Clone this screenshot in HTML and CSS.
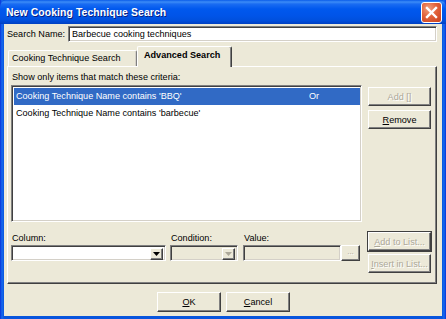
FILE: index.html
```html
<!DOCTYPE html>
<html>
<head>
<meta charset="utf-8">
<link rel="stylesheet" href="styles.css">
</head>
<body>
<div class="window">
  <div class="titlebar">
    <span class="title">New Cooking Technique Search</span>
    <span class="close">
      <svg width="21" height="21" viewBox="0 0 21 21">
        <path d="M6 6 L15 15 M15 6 L6 15" stroke="#fff" stroke-width="2.4" stroke-linecap="square"/>
      </svg>
    </span>
  </div>
  <div class="client">
    <div class="search-row">
      <label class="search-label">Search Name:</label>
      <div class="field search-field">Barbecue cooking techniques</div>
    </div>
    <div class="tabs">
      <div class="tab">Cooking Technique Search</div>
      <div class="tab active">Advanced Search</div>
    </div>
    <div class="panel">
      <div class="criteria-label">Show only items that match these criteria:</div>
      <div class="top-row">
        <div class="list">
          <div class="item selected"><span class="item-text">Cooking Technique Name contains 'BBQ'</span><span class="item-op">Or</span></div>
          <div class="item"><span class="item-text">Cooking Technique Name contains 'barbecue'</span></div>
        </div>
        <div class="btn-col">
          <div class="btn disabled">Add []</div>
          <div class="btn"><u>R</u>emove</div>
        </div>
      </div>
      <div class="bottom-row">
        <div class="fields">
          <div class="fgroup g-col">
            <div class="flabel">Column:</div>
            <div class="combo">
              <div class="combo-text"></div>
              <div class="arrow"><svg width="7" height="4" viewBox="0 0 7 4"><path d="M0 0H7L3.5 4Z" fill="#000"/></svg></div>
            </div>
          </div>
          <div class="fgroup g-cond">
            <div class="flabel">Condition:</div>
            <div class="combo dis">
              <div class="combo-text"></div>
              <div class="arrow"><svg width="7" height="4" viewBox="0 0 7 4"><path d="M0 0H7L3.5 4Z" fill="#aca899"/></svg></div>
            </div>
          </div>
          <div class="fgroup g-val">
            <div class="flabel">Value:</div>
            <div class="val-row">
              <div class="field val-field dis"></div>
              <div class="btn dots disabled">...</div>
            </div>
          </div>
        </div>
        <div class="btn-col btn-col2">
          <div class="btn disabled focus"><u>A</u>dd to List...</div>
          <div class="btn disabled"><u>I</u>nsert in List...</div>
        </div>
      </div>
    </div>
    <div class="footer">
      <div class="btn big"><u>O</u>K</div>
      <div class="btn big"><u>C</u>ancel</div>
    </div>
  </div>
</div>
</body>
</html>
```

FILE: styles.css
```css
* { box-sizing: border-box; }
html, body { margin: 0; padding: 0; }
body {
  width: 446px;
  height: 319px;
  overflow: hidden;
  font-family: "Liberation Sans", Arial, sans-serif;
  font-size: 9.1px;
  color: #000;
  white-space: nowrap;
}
.window {
  width: 446px;
  height: 319px;
  background: linear-gradient(to right, #0831d9 0, #166aee 2px, #0855dd 4px, #0855dd 442px, #166aee 444px, #0831d9 446px);
  display: flex;
  flex-direction: column;
  padding: 0 4px 3px 4px;
}
.titlebar {
  height: 24px;
  margin: 0 -4px;
  padding: 0 4px 0 6px;
  display: flex;
  align-items: center;
  justify-content: space-between;
  background: linear-gradient(to bottom, #0a5ce9 0, #3c8cf7 2px, #1a6cf2 4px, #0058ee 9px, #0054e8 16px, #0050de 20px, #0048d2 22px, #0040c0 24px);
  border-radius: 7px 7px 0 0;
}
.title {
  color: #fff;
  font-weight: bold;
  font-size: 10.4px;
  text-shadow: 1px 1px #0a1e80;
  letter-spacing: 0.1px;
  padding-top: 1px;
}
.close {
  width: 21px;
  height: 21px;
  margin-top: 1px;
  border: 1px solid #fff;
  border-radius: 3px;
  background: radial-gradient(circle at 35% 30%, #f0a080 0, #e2623a 45%, #c8401c 100%);
  display: flex;
}
.close svg { margin: -1px; }
.client {
  flex: 1;
  background: #ece9d8;
  display: flex;
  flex-direction: column;
  padding: 2px 5px 0 3px;
}
.search-row {
  display: flex;
  align-items: center;
  height: 16px;
}
.search-label { width: 61px; }
.field {
  background: #fff;
  border: 1px solid;
  border-color: #808080 #fff #fff #808080;
  box-shadow: inset 1px 1px #404040, inset -1px -1px #d4d0c8;
}
.search-field {
  flex: 1;
  height: 16px;
  padding: 1px 3px 0 3px;
  line-height: 13px;
}
.tabs {
  display: flex;
  align-items: flex-end;
  margin-top: 4px;
  height: 20px;
  position: relative;
  z-index: 2;
}
.tab {
  height: 16px;
  margin-left: 1px;
  width: 129px;
  padding-left: 3px;
  line-height: 15px;
  border: 1px solid;
  border-color: #fff #808080 transparent #fff;
  border-bottom: none;
  border-radius: 2px 2px 0 0;
  box-shadow: inset -1px 0 #d4d0c8;
}
.tab.active {
  height: 21px;
  margin-left: 0;
  margin-bottom: -1px;
  width: 95px;
  padding-left: 6px;
  line-height: 17px;
  font-weight: bold;
  background: #ece9d8;
  border-right-color: #404040;
  box-shadow: inset -1px 0 #808080;
}
.panel {
  height: 218px;
  border: 1px solid;
  border-color: #fff #404040 #404040 #fff;
  box-shadow: inset -1px -1px #808080;
  padding: 4px 4px 0 3px;
  display: flex;
  flex-direction: column;
}
.criteria-label { height: 14px; line-height: 12px; padding-left: 1px; }
.top-row {
  display: flex;
  gap: 6px;
}
.list {
  width: 351px;
  height: 137px;
  background: #fff;
  border: 1px solid;
  border-color: #808080 #fff #fff #808080;
  box-shadow: inset 1px 1px #404040, inset -1px -1px #d4d0c8;
  padding: 2px 0 0 2px;
}
.item {
  height: 17px;
  line-height: 16px;
  padding-left: 2px;
  display: flex;
}
.item.selected {
  background: #316ac5;
  color: #fff;
  margin-right: 1px;
}
.item-text { width: 293px; }
.btn-col {
  width: 63px;
  display: flex;
  flex-direction: column;
  gap: 4px;
  padding-top: 2px;
}
.btn {
  height: 19px;
  background: #ece9d8;
  border: 1px solid;
  border-color: #fff #404040 #404040 #fff;
  box-shadow: inset -1px -1px #808080;
  display: flex;
  align-items: center;
  justify-content: center;
  line-height: 12px;
}
.btn.disabled {
  color: #aca899;
  text-shadow: 1px 1px #fff;
}
.btn.focus {
  outline: 1px solid #404040;
  outline-offset: 0;
}
.bottom-row {
  display: flex;
  gap: 6px;
  margin-top: 10px;
}
.fields {
  width: 351px;
  display: flex;
  padding-top: 1px;
}
.fgroup { display: flex; flex-direction: column; }
.flabel { height: 12px; line-height: 10px; padding-left: 1px; }
.g-col { width: 155px; margin-right: 4px; }
.g-cond { width: 68px; margin-right: 5px; }
.g-val { width: 118px; }
.combo {
  height: 16px;
  display: flex;
  background: #fff;
  border: 1px solid;
  border-color: #808080 #fff #fff #808080;
  box-shadow: inset 1px 1px #404040, inset -1px -1px #d4d0c8;
  padding: 2px;
}
.combo.dis, .field.dis { background: #ece9d8; }
.combo-text { flex: 1; }
.arrow {
  width: 13px;
  height: 12px;
  background: #ece9d8;
  border: 1px solid;
  border-color: #fff #404040 #404040 #fff;
  box-shadow: inset -1px -1px #808080;
  display: flex;
  align-items: center;
  justify-content: center;
}
.val-row { display: flex; }
.val-field { width: 98px; height: 16px; }
.btn.dots { width: 19px; height: 16px; line-height: 8px; align-items: flex-end; padding-bottom: 4px; font-size: 8px; }
.btn-col2 { padding-top: 0; gap: 3px; }
.footer {
  display: flex;
  justify-content: center;
  gap: 5px;
  margin-top: 8px;
  padding-left: 3px;
}
.btn.big { width: 64px; height: 20px; }
u { text-decoration: underline; text-underline-offset: 1px; }
```
